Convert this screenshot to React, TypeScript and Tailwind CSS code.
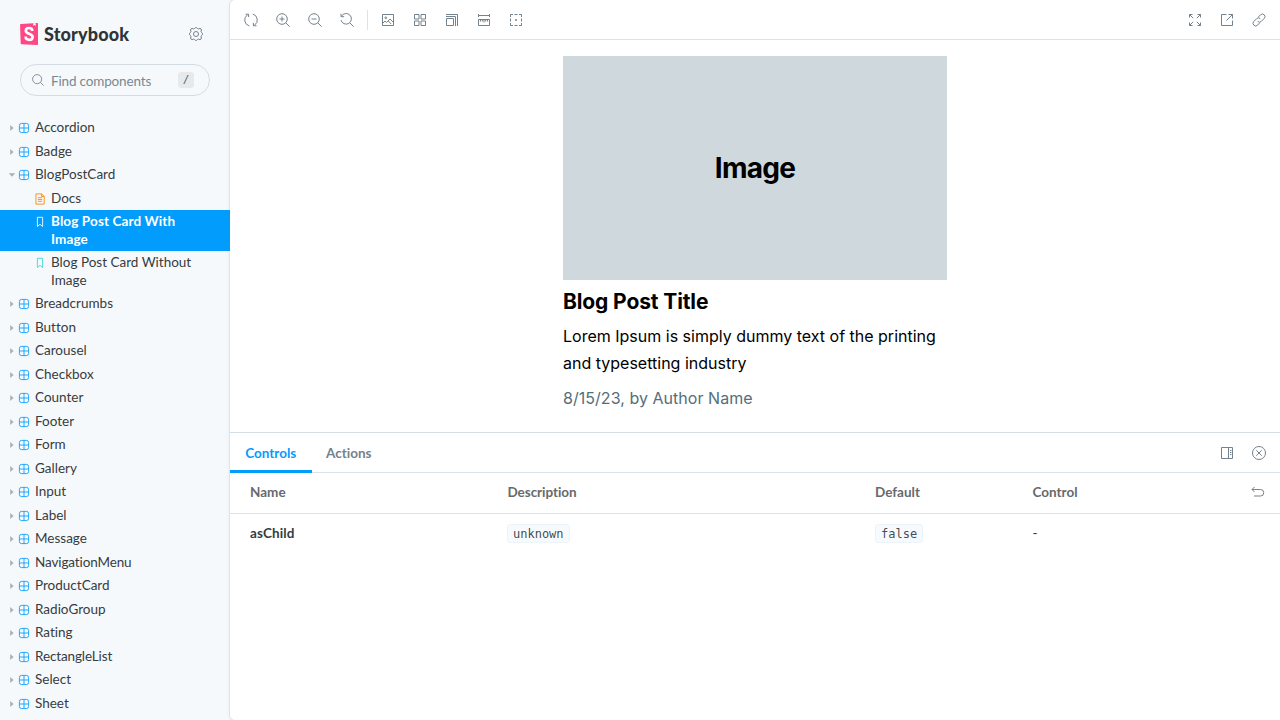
import type { ReactNode } from "react";

function Icon({ children, className = "size-3.5" }: { children: ReactNode; className?: string }) {
  return (
    <svg viewBox="0 0 14 14" fill="none" stroke="currentColor" strokeWidth="1" className={`block shrink-0 ${className}`} aria-hidden="true">
      {children}
    </svg>
  );
}

function ToolButton({ label, children }: { label: string; children: ReactNode }) {
  return (
    <button aria-label={label} className="flex size-7 items-center justify-center text-[#73828c]">
      <Icon>{children}</Icon>
    </button>
  );
}

function ComponentIcon() {
  return (
    <svg viewBox="0 0 12 12" fill="none" stroke="currentColor" strokeWidth="0.86" className="block size-3 shrink-0 text-[#029cfd]" aria-hidden="true">
      <rect x="1.400" y="1.400" width="9.200" height="9.200" rx="2.100" />
      <path d="M6 1.400v9.200M1.400 6h9.200" />
    </svg>
  );
}

function BookmarkIcon({ className }: { className: string }) {
  return (
    <svg viewBox="0 0 12 12" fill="none" stroke="currentColor" strokeWidth="0.86" className={`block size-3 shrink-0 ${className}`} aria-hidden="true">
      <path d="M3.400 1.300h5.200v9.200L6 8.300l-2.600 2.200z" strokeLinejoin="round" />
    </svg>
  );
}

function DocumentIcon() {
  return (
    <svg viewBox="0 0 12 12" fill="none" stroke="currentColor" strokeWidth="0.86" className="block size-3 shrink-0 text-[#ff8300]" aria-hidden="true">
      <path strokeLinejoin="round" d="M1.900.900h5.800l2.500 2.500v7.700H1.900zM7.600.900v2.600h2.600M3.800 4.700h4.400M3.800 6.500h4.400M3.800 8.300h4.400" />
    </svg>
  );
}

function TreeItem({ name, open = false }: { name: string; open?: boolean }) {
  return (
    <li className="flex h-[23.5px] items-start pl-2 pt-[3px]">
      <span className="flex h-[18px] w-2.5 items-center">
        {open ? (
          <svg viewBox="0 0 8 4" className="h-1 w-2 fill-[#a8b0b5]"><path d="M.7.2h6.600L4 3.800z" /></svg>
        ) : (
          <svg viewBox="0 0 4 8" className="ml-0.5 h-2 w-1 fill-[#a8b0b5]"><path d="M.2.900v6.200L3.600 4z" /></svg>
        )}
      </span>
      <span className="flex h-[18px] items-center"><ComponentIcon /></span>
      <span className={`ml-[5px] leading-[17.5px] ${name.length > 12 ? "tracking-[-0.12px]" : ""}`}>{name}</span>
    </li>
  );
}

function Logo() {
  return (
    <div className="flex items-center gap-[6px]">
      <svg viewBox="0 0 18 22" className="h-[22px] w-[18px]" aria-hidden="true">
        <path fill="#ff4785" d="M.8 1.100 17.200.05a.7.7 0 0 1 .8.7v20.500a.75.75 0 0 1-.8.75L1.500 21.250a.8.8 0 0 1-.8-.75L.05 1.900a.8.8 0 0 1 .75-.8z" />
        <path fill="#fff" d="M13.300.3 15.600.15l.1 2.500-.3.1-.9-.7-1 .8-.3-.2z" />
        <path fill="none" stroke="#fff" strokeWidth="2.700" d="M12.300 8c0-2.100-1-3-3.100-3S5.800 6 5.800 7.700c0 3.700 6.800 2.600 6.800 6.300 0 1.900-1.300 2.900-3.300 2.900-2.300 0-3.700-1-3.600-3.400" />
      </svg>
      <span className="text-[18px] leading-6 font-black tracking-[0.16px] text-[#2e3438]">Storybook</span>
    </div>
  );
}

const before = ["Accordion", "Badge"];
const after = [
  "Breadcrumbs", "Button", "Carousel", "Checkbox", "Counter", "Footer", "Form", "Gallery", "Input",
  "Label", "Message", "NavigationMenu", "ProductCard", "RadioGroup", "Rating", "RectangleList", "Select", "Sheet",
];

function Sidebar() {
  return (
    <aside className="z-10 flex w-[230px] shrink-0 flex-col overflow-hidden">
      <div className="mt-[22px] flex h-6 items-center justify-between pr-[27px] pl-5">
        <Logo />
        <button aria-label="Settings" className="text-[#73828c]">
          <Icon>
            <circle cx="7" cy="7" r="2.500" />
            <path strokeLinejoin="round" d="M5.700 1.300a1.500 1.500 0 0 1 2.600 0 1.500 1.500 0 0 0 1.500.600 1.500 1.500 0 0 1 2.200 2.200 1.500 1.500 0 0 0 .6 1.500 1.500 1.500 0 0 1 0 2.800 1.500 1.500 0 0 0-.6 1.500 1.500 1.500 0 0 1-2.200 2.200 1.500 1.500 0 0 0-1.500.600 1.500 1.500 0 0 1-2.600 0 1.500 1.500 0 0 0-1.500-.6A1.500 1.500 0 0 1 2 9.900a1.500 1.500 0 0 0-.6-1.500 1.500 1.500 0 0 1 0-2.800A1.500 1.500 0 0 0 2 4.100a1.500 1.500 0 0 1 2.200-2.200 1.500 1.500 0 0 0 1.500-.6z" />
          </Icon>
        </button>
      </div>
      <div className="mx-5 mt-[18px] flex h-8 shrink-0 items-center rounded-full border border-[#d4dde3] pr-[15px] pl-[11px] text-[#798992]">
        <Icon className="size-3 text-[#73828c]"><circle cx="6" cy="6" r="5.300" /><path d="m9.800 9.800 3.800 3.800" /></Icon>
        <span className="ml-[7px] flex-1 pt-px text-[13.500px] leading-5 tracking-[-0.16px]">Find components</span>
        <kbd className="flex h-4 w-4 items-center justify-center rounded-[3px] bg-[#e6eaed] font-['DejaVu_Sans_Mono'] text-[11px] text-[#5c6870]">/</kbd>
      </div>
      <ul className="mt-5 shrink-0">
        {before.map((name) => <TreeItem key={name} name={name} />)}
        <TreeItem name="BlogPostCard" open />
        <li className="flex h-[23.5px] items-start pt-[3px] pl-[34px]">
          <span className="flex h-[18px] items-center"><DocumentIcon /></span>
          <span className="ml-[5px] leading-[17.5px]">Docs</span>
        </li>
        <li className="flex h-[41px] items-start bg-[#029cfd] pt-[3px] pl-[34px] font-bold text-white">
          <span className="flex h-[18px] items-center"><BookmarkIcon className="text-white" /></span>
          <span className="ml-[5px] w-[145px] leading-[17.5px] tracking-[0.12px]">Blog Post Card With Image</span>
        </li>
        <li className="flex h-[41px] items-start pt-[3px] pl-[34px]">
          <span className="flex h-[18px] items-center"><BookmarkIcon className="text-[#37d5d3]" /></span>
          <span className="ml-[5px] w-[150px] leading-[17.5px]">Blog Post Card Without Image</span>
        </li>
        {after.map((name) => <TreeItem key={name} name={name} />)}
      </ul>
    </aside>
  );
}

function Toolbar() {
  return (
    <div className="flex h-10 shrink-0 items-center justify-between border-b border-[#dce3e8] px-[7px]">
      <div className="flex items-center gap-1">
        <ToolButton label="Remount component">
          <path d="M5.300 13A6.200 6.200 0 0 1 3.400 1.900M8.700 1a6.200 6.200 0 0 1 1.900 11.100M1.500 1.300l3-.2.2 3M12.500 12.700l-3 .2-.2-3" />
        </ToolButton>
        <ToolButton label="Zoom in"><circle cx="6" cy="6" r="5.300" /><path d="m9.800 9.800 3.800 3.800M6 3.500v5M3.500 6h5" /></ToolButton>
        <ToolButton label="Zoom out"><circle cx="6" cy="6" r="5.300" /><path d="m9.800 9.800 3.800 3.800M3.500 6h5" /></ToolButton>
        <ToolButton label="Reset zoom"><path d="M1.500 3.200a5.300 5.300 0 1 1-.5 4M1 .700v3h3.100M9.800 9.800l3.800 3.800" /></ToolButton>
        <span className="mx-[2px] h-5 w-px bg-[#dce3e8]" />
        <ToolButton label="Background">
          <path d="M1.500 1.500h11v11h-11zM1.500 10.500 4 8l1.600 1.500L9 6l3.500 3.500M7.200 8l3 3" /><circle cx="4.800" cy="4.800" r=".9" />
        </ToolButton>
        <ToolButton label="Grid">
          <path d="M1.500 1.500H6V6H1.500zM8 1.500h4.500V6H8zM1.500 8H6v4.500H1.500zM8 8h4.500v4.500H8z" />
        </ToolButton>
        <ToolButton label="Viewport"><path d="M1 1.500h11.500V13M1 3.500h9.500V13M1.500 5.500h7v7h-7z" /></ToolButton>
        <ToolButton label="Measure"><path d="M1.500 1v3M12.500 1v3M1.500 2.500h11M1.500 6.500h11v6h-11zM3.500 6.500v2M5.300 6.500v2M7 6.500v3M8.700 6.500v2M10.500 6.500v2" /></ToolButton>
        <ToolButton label="Outline"><path d="M1.500 4V1.500H4M5.500 1.500h3M10 1.500h2.500V4M12.500 5.500v3M12.500 10v2.500H10M8.500 12.500h-3M4 12.500H1.500V10M1.500 8.500v-3" /><path d="M6 7h2" strokeWidth="1.500" /></ToolButton>
      </div>
      <div className="flex items-center gap-1">
        <ToolButton label="Full screen"><path d="M1.500 4.500v-3h3M9.500 1.500h3v3M12.500 9.500v3h-3M4.500 12.500h-3v-3M1.500 1.500 5.200 5.200M12.500 1.500 8.800 5.200M12.500 12.500 8.800 8.800M1.500 12.500l3.700-3.700" /></ToolButton>
        <ToolButton label="Open in new tab"><path d="M6.500 1.500h-5v11h11v-5M8.500 1.500h4v4M12.500 1.500 6.500 7.500" /></ToolButton>
        <ToolButton label="Copy link"><path d="m6.200 4.200 2.300-2.400a2.600 2.600 0 0 1 3.700 3.700L9.400 8.300a2.600 2.600 0 0 1-3.700 0M7.800 9.800l-2.300 2.400a2.600 2.600 0 0 1-3.700-3.700l2.800-2.800a2.600 2.600 0 0 1 3.700 0" /></ToolButton>
      </div>
    </div>
  );
}

function Preview() {
  return (
    <div className="flex h-[392px] shrink-0 justify-center pt-4 font-['Inter',sans-serif] text-black">
      <article className="w-96">
        <div className="flex h-56 items-center justify-center bg-[#cfd8dd] text-[28px] font-bold tracking-[-0.7px]">Image</div>
        <h2 className="mt-2 text-[21px] leading-7 font-bold tracking-[-0.12px]">Blog Post Title</h2>
        <p className="mt-[7px] text-base leading-[27px]">Lorem Ipsum is simply dummy text of the printing and typesetting industry</p>
        <p className="mt-2 text-base leading-[27px] tracking-[0.04px] text-[#546e7a]">8/15/23, by Author Name</p>
      </article>
    </div>
  );
}

function Code({ children }: { children: ReactNode }) {
  return <code className="inline-block h-[19px] rounded-[3px] border border-[#ecf4f9] bg-[#f7fafc] px-[5px] font-['DejaVu_Sans_Mono'] text-[12px] leading-[18px] text-[#2e3438]/90">{children}</code>;
}

function Panel() {
  return (
    <section className="flex-1 border-t border-[#d4dde3]">
      <div className="flex h-10 items-center justify-between border-b border-[#dce3e8] pr-[7px] font-bold">
        <div className="flex">
          <button className="h-10 w-[81.5px] border-b-[3px] border-[#029cfd] pt-[5px] text-[#029cfd]">Controls</button>
          <button className="h-10 px-[14.5px] pt-[2px] text-[#73828c]">Actions</button>
        </div>
        <div className="flex items-center gap-1">
          <ToolButton label="Change orientation"><path d="M1.500 1.500h11v11h-11zM8.500 1.500v11M10 4.500h1.500M10 6.500h1.500M10 8.500h1.500" /></ToolButton>
          <ToolButton label="Hide addons"><circle cx="7" cy="7" r="6.500" /><path d="m4.300 4.300 5.400 5.400M9.700 4.300 4.300 9.700" /></ToolButton>
        </div>
      </div>
      <div className="grid h-[41px] grid-cols-[25%_35%_15%_25%] items-center border-b border-[#dce3e8] pb-[2px] font-bold text-[#666a6d]">
        <span className="pl-5">Name</span>
        <span className="pl-[15px] tracking-[-0.06px]">Description</span>
        <span className="pl-[15px]">Default</span>
        <span className="flex items-center justify-between pr-2 pl-[15px]">
          Control
          <ToolButton label="Reset controls"><path d="M3.500 2 1 4.500 3.500 7M1 4.500h8.500a3 3 0 0 1 0 6.500H3" /></ToolButton>
        </span>
      </div>
      <div className="grid h-[38px] grid-cols-[25%_35%_15%_25%] items-center">
        <span className="pl-5 font-bold tracking-[0.12px]">asChild</span>
        <span className="flex pl-[14.5px]"><Code>unknown</Code></span>
        <span className="flex pl-[15px]"><Code>false</Code></span>
        <span className="pl-[15px]">-</span>
      </div>
    </section>
  );
}

export default function App() {
  return (
    <div className="flex h-[720px] w-[1280px] overflow-hidden bg-[#f6f9fc] font-['Lato',sans-serif] text-[13.500px] text-[#363c40] antialiased [font-variant-ligatures:none]">
      <Sidebar />
      <main className="flex min-w-0 flex-1 flex-col overflow-hidden rounded-l-[5px] bg-white shadow-[0_0_0_1px_#dfe4e8,0_1px_5px_rgba(0,0,0,0.06)]">
        <Toolbar />
        <Preview />
        <Panel />
      </main>
    </div>
  );
}
